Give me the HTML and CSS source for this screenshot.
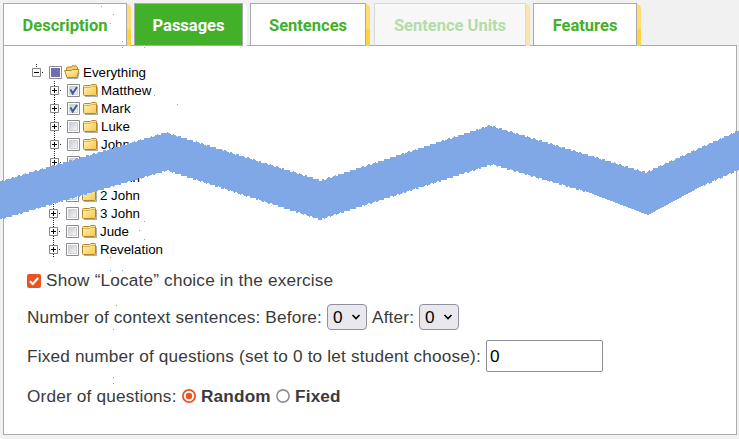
FILE: index.html
```html
<!DOCTYPE html>
<html lang="en">
<head>
<meta charset="utf-8">
<title>Exercise editor</title>
<link rel="stylesheet" href="styles.css">
</head>
<body>
<svg class="defs" width="0" height="0" aria-hidden="true">
  <defs>
    <linearGradient id="gold" x1="0" y1="0" x2="1" y2="1"><stop offset="0" stop-color="#fff6bd"/><stop offset="1" stop-color="#f5c64a"/></linearGradient>
    <linearGradient id="grey" x1="0" y1="0" x2="1" y2="1"><stop offset="0" stop-color="#c4c8d0"/><stop offset="1" stop-color="#fafafa"/></linearGradient>
    <symbol id="folder" viewBox="0 0 16 14">
      <path d="M2 13.500h12.300V4" fill="none" stroke="#777" stroke-opacity=".6" stroke-width="1.400"/>
      <path d="M.5 3.500V11.500q0 1 1 1H12.500q1 0 1-1V2.500q0-1-1-1H8.500L7.500 2.500H1.500q-1 0-1 1z" fill="url(#gold)" stroke="#b5852c"/>
      <path d="M1 4.500h6.500l1-1H13" fill="none" stroke="#d9a63c" stroke-width=".8"/>
    </symbol>
    <symbol id="open" viewBox="0 0 16 14">
      <path d="M3 13.500h10.500l1.500-6" fill="none" stroke="#777" stroke-opacity=".6" stroke-width="1.400"/>
      <path d="M2.500 11.500V3L3.500 2H7L8.500.8H12L13.500 2.500V11" fill="#f3cf62" stroke="#b5852c"/>
      <path d="M.6 5.500H7.500L8.500 4.500H15L13 12.500H3z" fill="url(#gold)" stroke="#b5852c"/>
    </symbol>
    <symbol id="box" viewBox="0 0 13 13">
      <path d="M.5.5h12v12H.5z" fill="#fff" stroke="#8c8c8c"/><path d="M2.500 2.500h8v8h-8z" fill="url(#grey)" stroke="#d0d1d5"/>
    </symbol>
    <symbol id="checked" viewBox="0 0 13 13">
      <use href="#box"/><path d="M3.500 5.500l2.200 4L10 3" fill="none" stroke="#405b9b" stroke-width="2"/>
    </symbol>
    <symbol id="partial" viewBox="0 0 13 13">
      <path d="M.5.5h12v12H.5z" fill="#fff" stroke="#8c8c8c"/><path d="M2 2h9v9H2z" fill="#7070b0"/>
    </symbol>
    <symbol id="plus" viewBox="0 0 12 18">
      <path d="M4.500 0v5M4.500 14v4M10 9.500h2" fill="none" stroke="#222" stroke-dasharray="1 1"/>
      <path d="M.5 5.500h8v8h-8z" fill="#fff" stroke="#858585"/><path d="M2 9.500h5M4.500 7v5" stroke="#000"/>
    </symbol>
    <symbol id="minus" viewBox="0 0 12 18">
      <path d="M4.500 1v4M10 9.500h2" fill="none" stroke="#222" stroke-dasharray="1 1"/>
      <path d="M.5 5.500h8v8h-8z" fill="#fff" stroke="#858585"/><path d="M2 9.500h5" stroke="#000"/>
    </symbol>
  </defs>
</svg>

<main class="page">
  <nav class="tabs">
    <a class="tab description">Description</a>
    <a class="tab passages active">Passages</a>
    <a class="tab sentences">Sentences</a>
    <a class="tab units disabled">Sentence Units</a>
    <a class="tab features">Features</a>
  </nav>
  <section class="panel">
    <div class="tree">
      <div class="node root"><svg class="toggle"><use href="#minus"/></svg><svg class="check"><use href="#partial"/></svg><svg class="folder"><use href="#open"/></svg><span>Everything</span></div>
      <div class="node"><svg class="toggle"><use href="#plus"/></svg><svg class="check"><use href="#checked"/></svg><svg class="folder"><use href="#folder"/></svg><span>Matthew</span></div>
      <div class="node"><svg class="toggle"><use href="#plus"/></svg><svg class="check"><use href="#checked"/></svg><svg class="folder"><use href="#folder"/></svg><span>Mark</span></div>
      <div class="node"><svg class="toggle"><use href="#plus"/></svg><svg class="check"><use href="#box"/></svg><svg class="folder"><use href="#folder"/></svg><span>Luke</span></div>
      <div class="node"><svg class="toggle"><use href="#plus"/></svg><svg class="check"><use href="#box"/></svg><svg class="folder"><use href="#folder"/></svg><span>John</span></div>
      <div class="cut"><div class="node"><svg class="toggle"><use href="#plus"/></svg><svg class="check"><use href="#box"/></svg><svg class="folder"><use href="#folder"/></svg></div></div>
      <div class="rest">
        <div class="node"><svg class="toggle"><use href="#plus"/></svg><svg class="check"><use href="#box"/></svg><svg class="folder"><use href="#folder"/></svg><span>1 John</span></div>
        <div class="node"><svg class="toggle"><use href="#plus"/></svg><svg class="check"><use href="#box"/></svg><svg class="folder"><use href="#folder"/></svg><span>2 John</span></div>
        <div class="node"><svg class="toggle"><use href="#plus"/></svg><svg class="check"><use href="#box"/></svg><svg class="folder"><use href="#folder"/></svg><span>3 John</span></div>
        <div class="node"><svg class="toggle"><use href="#plus"/></svg><svg class="check"><use href="#box"/></svg><svg class="folder"><use href="#folder"/></svg><span>Jude</span></div>
        <div class="node"><svg class="toggle"><use href="#plus"/></svg><svg class="check"><use href="#box"/></svg><svg class="folder"><use href="#folder"/></svg><span>Revelation</span></div>
      </div>
    </div>
    <div class="form">
      <div class="row locate">
        <svg class="tick" viewBox="0 0 14 14"><rect width="14" height="14" rx="2" fill="#e95420"/><path d="M3 7.200l2.800 2.800L11.200 4" fill="none" stroke="#fff" stroke-width="2"/></svg>
        <span>Show “Locate” choice in the exercise</span>
      </div>
      <div class="row context">
        <span class="before">Number of context sentences: Before:</span>
        <span class="select">0<svg viewBox="0 0 10 6"><path d="M1.500 1L5 4.500 8.500 1" fill="none" stroke="#000" stroke-width="1.600"/></svg></span>
        <span class="after">After:</span>
        <span class="select">0<svg viewBox="0 0 10 6"><path d="M1.500 1L5 4.500 8.500 1" fill="none" stroke="#000" stroke-width="1.600"/></svg></span>
      </div>
      <div class="row count"><span class="question">Fixed number of questions (set to 0 to let student choose):</span><span class="input">0</span></div>
      <div class="row order">
        <span class="label">Order of questions:</span>
        <svg class="radio" viewBox="0 0 14 14"><circle cx="7" cy="7" r="6.100" fill="#fff" stroke="#e95420" stroke-width="1.800"/><circle cx="7" cy="7" r="3.200" fill="#e95420"/></svg>
        <b class="random">Random</b>
        <svg class="radio" viewBox="0 0 14 14"><circle cx="7" cy="7" r="6.100" fill="#fff" stroke="#8f8f9d" stroke-width="1.600"/></svg>
        <b>Fixed</b>
      </div>
    </div>
  </section>
  <svg class="tear" viewBox="0 0 739 439" shape-rendering="crispEdges" aria-hidden="true">
    <path d="M0 182L166 133 321 181 490 126 646 173 739 131V169L702 186 648 215 585 191 492 164 320 219 167 170 0 219z" fill="#80a8e6"/>
    <path d="M0 182L166 133 321 181 490 126 646 173 739 131M739 169L702 186M585 191L492 164 320 219 167 170 0 219" fill="none" stroke="#80a8e6" stroke-width="2" stroke-dasharray="3 3"/>
    <path d="M101 6h1M113 14h1M110 23h1M122 41h1M122 47h1M144 47h1M154 95h1M177 104h1M113 119h1M144 221h1M139 230h1M144 239h1M110 257h1M110 270h1M122 270h1M116 305h1M113 329h1M113 377h1M113 383h1" stroke="#78acd8" transform="translate(0 .5)"/>
  </svg>
</main>
</body>
</html>
```
FILE: styles.css
```css
* { box-sizing: border-box; }
body { margin: 0; background: #f1f1f1; color: #3a3a3a; font: 17.2px/20px "Liberation Sans", Arial, sans-serif; }
.defs { position: absolute; }
svg { display: block; flex: none; }
.page { position: relative; width: 739px; height: 439px; padding: 3px 2px 4px 3px; overflow: hidden; }

.tabs { display: flex; gap: 7px; height: 42px; }
.tab {
  position: relative; height: 43px; border: 1px solid #aaa; background: #fff;
  color: #43b02a; font: 700 16.5px/44px Roboto, sans-serif; text-align: center; white-space: nowrap;
}
.tab::after {
  content: ""; position: absolute; left: 100%; top: 0; width: 4px; height: 42px; margin-left: 1px;
  background: linear-gradient(#ffdc73 60%, #ffd23f 60%); border-top-right-radius: 4px 5px;
}
.description { width: 124px; }
.passages { width: 109px; }
.sentences { width: 116px; }
.units { width: 152px; margin-left: 1px; }
.features { width: 104px; }
.active { background: #43b02a; color: #fff; }
.active::after { background: #fff; }
.disabled { background: #f7f7f7; color: #b4dcab; border-color: #d9d9d9 #d9d9d9 #aaa; }
.disabled::after { background: #f8e4ac; }

.panel { width: 734px; height: 390px; border: 1px solid #aaa; background: #fff; padding: 17px 0 0 23px; }
.tree { color: #000; font-size: 13.33px; line-height: 18px; padding-left: 23px; height: 195px; }
.node { display: flex; align-items: center; height: 18px; }
.node span { padding-top: 2px; }
.root { margin-left: -18px; }
.toggle { width: 12px; height: 18px; }
.check { width: 13px; height: 13px; margin-left: 5px; }
.folder { width: 16px; height: 14px; margin: 0 2px 0 3px; }
.root .folder { margin-left: 2px; margin-right: 3px; }
.cut { height: 15px; overflow: hidden; }
.rest { margin-left: -1px; }

.row { display: flex; align-items: center; white-space: nowrap; letter-spacing: .18px; }
.locate { height: 46px; gap: 5px; }
.locate span { padding-bottom: 2px; }
.context { height: 26px; gap: 5px; }
.count { height: 32px; gap: 5px; margin-top: 10px; }
.order { height: 20px; gap: 5px; margin-top: 14px; }
.before { width: 295px; }
.after { width: 42px; }
.question { width: 454px; }
.label { width: 150px; }
.random { width: 70px; }
.tick, .radio { width: 14px; height: 14px; }
.select { display: flex; align-items: center; justify-content: space-between; width: 40px; height: 26px; padding: 0 5px; border: 1px solid #8f8f9d; border-radius: 4px; background: #e9e9ed; color: #000; }
.select svg { width: 10px; height: 6px; }
.input { width: 117px; height: 32px; padding: 0 3px; border: 1px solid #8f8f9d; border-radius: 2px; background: #fff; color: #000; line-height: 30px; }
.tear { position: absolute; left: 0; top: 0; width: 739px; height: 439px; pointer-events: none; }
```
